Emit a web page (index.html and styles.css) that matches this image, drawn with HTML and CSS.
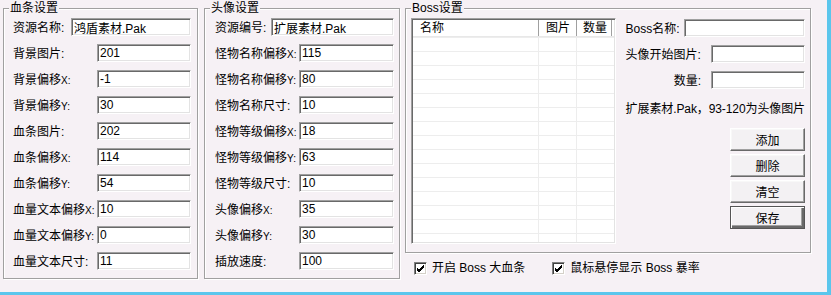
FILE: index.html
```html
<!DOCTYPE html>
<html lang="zh-CN">

<head>
    <meta charset="UTF-8">
    <meta name="viewport" content="width=device-width, initial-scale=1.0">
    <title>Boss设置</title>
    <link rel="stylesheet" href="styles.css">
</head>

<body>
    <div class="window">
        <!-- 血条设置 -->
        <fieldset class="group group-bar">
            <legend>血条设置</legend>
            <div class="rows">
                <div class="row"><label class="short">资源名称:</label><input value="鸿盾素材.Pak"></div>
                <div class="row"><label>背景图片:</label><input value="201"></div>
                <div class="row"><label>背景偏移<small>X:</small></label><input value="-1"></div>
                <div class="row"><label>背景偏移<small>Y:</small></label><input value="30"></div>
                <div class="row"><label>血条图片:</label><input value="202"></div>
                <div class="row"><label>血条偏移<small>X:</small></label><input value="114"></div>
                <div class="row"><label>血条偏移<small>Y:</small></label><input value="54"></div>
                <div class="row"><label>血量文本偏移<small>X:</small></label><input value="10"></div>
                <div class="row"><label>血量文本偏移<small>Y:</small></label><input value="0"></div>
                <div class="row"><label>血量文本尺寸:</label><input value="11"></div>
            </div>
        </fieldset>

        <!-- 头像设置 -->
        <fieldset class="group group-head">
            <legend>头像设置</legend>
            <div class="rows">
                <div class="row"><label class="short">资源编号:</label><input value="扩展素材.Pak"></div>
                <div class="row"><label>怪物名称偏移<small>X:</small></label><input value="115"></div>
                <div class="row"><label>怪物名称偏移<small>Y:</small></label><input value="80"></div>
                <div class="row"><label>怪物名称尺寸:</label><input value="10"></div>
                <div class="row"><label>怪物等级偏移<small>X:</small></label><input value="18"></div>
                <div class="row"><label>怪物等级偏移<small>Y:</small></label><input value="63"></div>
                <div class="row"><label>怪物等级尺寸:</label><input value="10"></div>
                <div class="row"><label>头像偏移<small>X:</small></label><input value="35"></div>
                <div class="row"><label>头像偏移<small>Y:</small></label><input value="30"></div>
                <div class="row"><label>插放速度:</label><input value="100"></div>
            </div>
        </fieldset>

        <!-- Boss设置 -->
        <div class="boss-col">
            <fieldset class="group group-boss">
                <legend>Boss设置</legend>
                <div class="boss-body">
                    <div class="list">
                        <div class="list-head">
                            <span class="col-name">名称</span>
                            <span class="col-pic">图片</span>
                            <span class="col-num">数量</span>
                        </div>
                        <div class="list-rows">
                            <div class="col-name"></div>
                            <div class="col-pic"></div>
                            <div class="col-num"></div>
                        </div>
                    </div>
                    <div class="side">
                        <div class="side-row"><label>Boss名称:</label><input class="wide"></div>
                        <div class="side-row"><label>头像开始图片:</label><input></div>
                        <div class="side-row"><label class="right">数量:</label><input></div>
                        <p class="info">扩展素材.Pak，93-120为头像图片</p>
                        <div class="buttons">
                            <button>添加</button>
                            <button>删除</button>
                            <button>清空</button>
                            <button class="default">保存</button>
                        </div>
                    </div>
                </div>
            </fieldset>
            <div class="checks">
                <label class="check"><span class="box"><svg width="9" height="9" viewBox="0 0 9 9"><path d="M1 4 L3 6 L8 1 M1 5 L3 7 L8 2 M1 6 L3 8 L8 3" fill="none" stroke="#000" stroke-width="1"/></svg></span>开启 Boss 大血条</label>
                <label class="check second"><span class="box"><svg width="9" height="9" viewBox="0 0 9 9"><path d="M1 4 L3 6 L8 1 M1 5 L3 7 L8 2 M1 6 L3 8 L8 3" fill="none" stroke="#000" stroke-width="1"/></svg></span>鼠标悬停显示 Boss 暴率</label>
            </div>
        </div>
    </div>
</body>

</html>
```

FILE: styles.css
```css
* {
    box-sizing: border-box;
}

body {
    margin: 0;
    background: #5bc6ec;
    font-family: "Liberation Sans", "Noto Sans CJK SC", sans-serif;
    font-size: 12px;
    color: #000;
}

.window {
    width: 827px;
    height: 292px;
    background: #f6f1f5;
    display: flex;
    align-items: flex-start;
    padding: 2px 0 0 3px;
}

/* group boxes */
.group {
    margin: 0;
    padding: 0;
    min-inline-size: 0;
    border: 1px solid #a0a0a0;
    box-shadow: inset 1px 1px #fff, 1px 1px #fff;

    legend {
        margin-left: 5px;
        padding: 0 1px;
        line-height: 13px;
        background: #f6f1f5;
    }
}

.group-bar {
    width: 195px;
    height: 277px;
    margin-right: 6px;

    .rows {
        padding: 3px 6px 0 9px;
    }

    label.short {
        width: 58px;
    }
}

.group-head {
    width: 196px;
    height: 277px;
    margin-right: 5px;

    .rows {
        padding: 3px 5px 0 10px;
    }

    label.short {
        width: 56px;
    }
}

.row {
    display: flex;
    height: 18px;
    margin-bottom: 8px;

    label {
        width: 84px;
        flex-shrink: 0;
        line-height: 20px;
        white-space: nowrap;
    }

    input {
        flex: 1;
    }
}

small {
    font-size: 10px;
}

input {
    min-width: 0;
    height: 18px;
    padding: 0 2px;
    font: inherit;
    background: #fff;
    border: 1px solid;
    border-color: #a0a0a0 #fff #fff #a0a0a0;
    box-shadow: inset 1px 1px #696969, inset -1px -1px #e3e3e3;
    outline: none;
}

/* boss */
.group-boss {
    width: 406px;
    height: 251px;
}

.boss-body {
    display: flex;
    padding: 3px 5px 0 5px;
    gap: 10px;
}

.list {
    width: 205px;
    height: 226px;
    background: #fff;
    border: 1px solid;
    border-color: #a0a0a0 #fff #fff #a0a0a0;
    box-shadow: inset 1px 1px #696969, inset -1px -1px #e3e3e3;
    padding: 1px;
    display: flex;
    flex-direction: column;

    .col-name {
        width: 126px;
    }

    .col-pic {
        width: 38px;
    }

    .col-num {
        flex: 1;
    }
}

.list-head {
    display: flex;
    height: 17px;
    border-bottom: 1px solid #e8e8e8;

    span {
        line-height: 16px;
        padding-left: 7px;
        border-right: 1px solid #a0a0a0;
    }

    .col-num {
        padding-left: 6px;
        margin-right: 2px;
    }
}

.list-rows {
    flex: 1;
    display: flex;

    div {
        border-right: 1px solid #ededed;
        background: repeating-linear-gradient(#ededed 0 1px, transparent 1px 14px);
    }

    .col-num {
        border-right: 0;
    }
}

.side {
    flex: 1;
    display: flex;
    flex-direction: column;
    padding-top: 1px;
}

.side-row {
    display: flex;
    height: 18px;
    margin-bottom: 8px;

    label {
        line-height: 20px;
        white-space: nowrap;
    }

    label.right {
        margin-left: auto;
    }

    input {
        width: 94px;
        margin-left: auto;
    }

    label.right + input {
        margin-left: 10px;
    }

    input.wide {
        width: 121px;
    }
}

.info {
    margin: 5px 0 0;
    line-height: 14px;
    white-space: nowrap;
    letter-spacing: -0.1px;
}

.buttons {
    display: flex;
    flex-direction: column;
    align-items: flex-end;
    gap: 3px;
    margin-top: 12px;
}

button {
    width: 75px;
    height: 23px;
    padding: 0;
    font: inherit;
    background: #f3f1f3;
    border: 1px solid;
    border-color: #fff #696969 #696969 #fff;
    box-shadow: inset -1px -1px #a0a0a0, inset 1px 1px #f8f8f8;

    &.default {
        border: 1px solid #555;
        box-shadow: inset 1px 1px #fff, inset -2px -2px #696969, inset -3px -3px #a0a0a0;
    }
}

.checks {
    display: flex;
    padding: 8px 0 0 9px;
}

.check {
    display: flex;
    align-items: center;
    gap: 5px;
    line-height: 14px;
    white-space: nowrap;

    &.second {
        margin-left: 27px;
    }
}

.box {
    width: 13px;
    height: 13px;
    background: #fff;
    border: 1px solid;
    border-color: #808080 #fff #fff #808080;
    box-shadow: inset 1px 1px #404040, inset -1px -1px #d4d0c8;
    display: flex;
    align-items: center;
    justify-content: center;
}
```
